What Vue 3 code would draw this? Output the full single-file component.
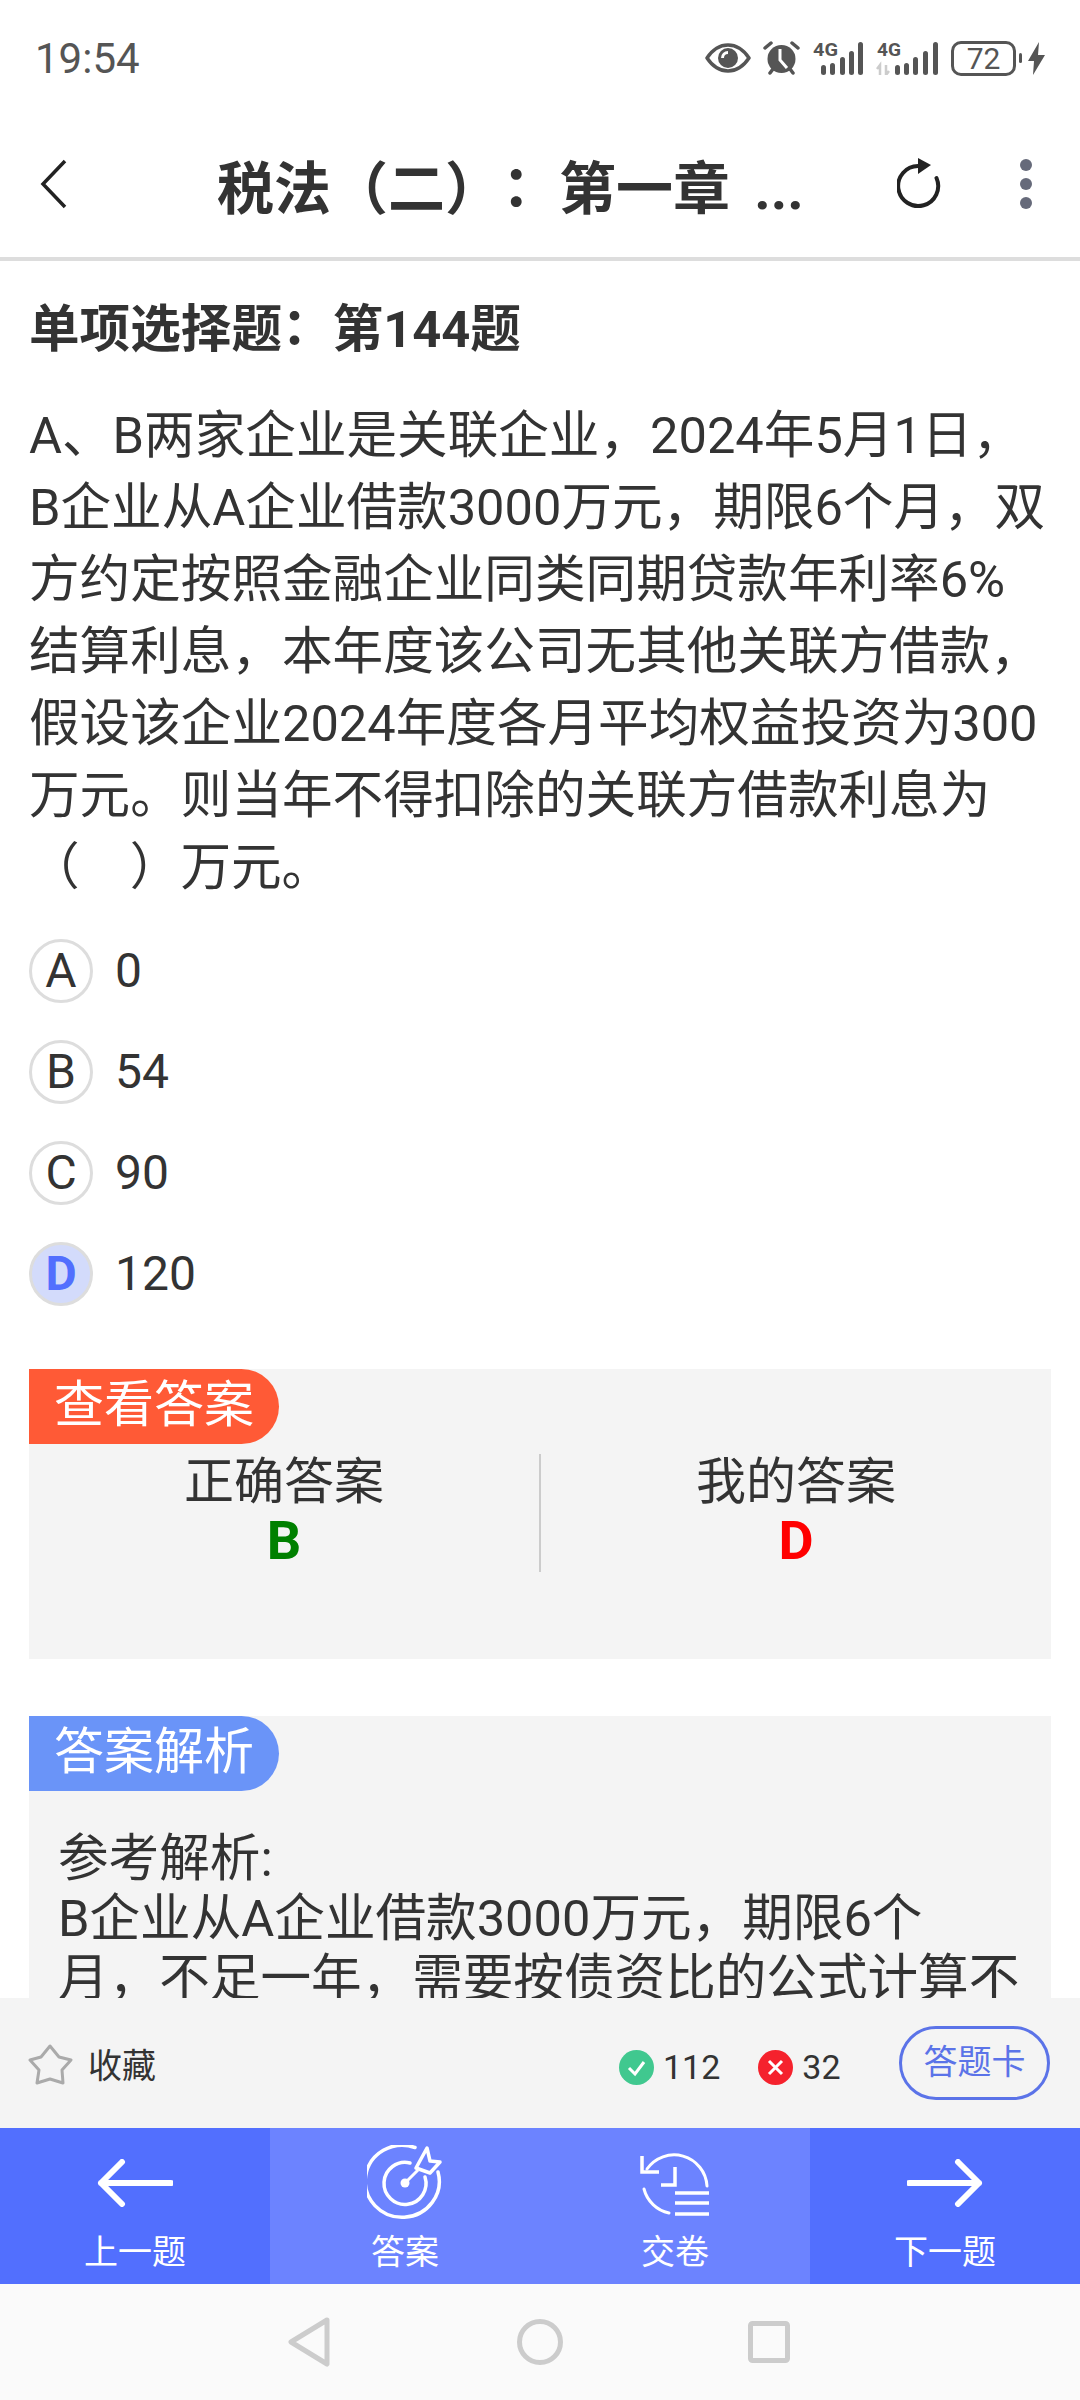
<script setup>
const questionLines = [
  'A、B两家企业是关联企业，2024年5月1日，',
  'B企业从A企业借款3000万元，期限6个月，双',
  '方约定按照金融企业同类同期贷款年利率6%',
  '结算利息，本年度该公司无其他关联方借款，',
  '假设该企业2024年度各月平均权益投资为300',
  '万元。则当年不得扣除的关联方借款利息为',
  '（\u00a0\u00a0\u00a0\u00a0）万元。'
]

const options = [
  { key: 'A', text: '0' },
  { key: 'B', text: '54' },
  { key: 'C', text: '90' },
  { key: 'D', text: '120', picked: true }
]

const analysisLines = [
  '参考解析:',
  'B企业从A企业借款3000万元，期限6个',
  '月，不足一年，需要按债资比的公式计算不',
  '得扣除的利息。'
]
</script>

<template>
  <div class="page">
    <div class="status">
      <span class="time">19:54</span>
      <div class="status__icons">
        <svg class="eye" width="46" height="30" viewBox="0 0 46 30">
          <path d="M2 15C8 6 15 2 23 2s15 4 21 13c-6 9-13 13-21 13S8 24 2 15z" fill="none" stroke="#555" stroke-width="3.5" stroke-linejoin="round" />
          <circle cx="23" cy="15" r="10" fill="#555" />
          <path d="M23 8a7 7 0 0 0-7 7h3a4 4 0 0 1 4-4z" fill="#fff" />
        </svg>
        <svg class="alarm" width="37" height="34" viewBox="0 0 37 34">
          <circle cx="18.5" cy="18" r="14" fill="#555" />
          <path d="M2 7l6-5M35 7l-6-5M7 32l3-4M30 32l-3-4" stroke="#555" stroke-width="3.5" stroke-linecap="round" />
          <path d="M17 8v11l7 8" fill="none" stroke="#fff" stroke-width="3" />
        </svg>
        <svg class="signal-one" width="50" height="33" viewBox="0 0 50 33">
          <text x="0" y="14" font-size="18" font-weight="700" font-family="Roboto, sans-serif" fill="#555" textLength="25" lengthAdjust="spacingAndGlyphs">4G</text>
          <rect x="8" y="23" width="5" height="10" rx="2.5" fill="#555" />
          <rect x="17" y="21" width="5" height="12" rx="2.5" fill="#555" />
          <rect x="27" y="15" width="5" height="18" rx="2.5" fill="#555" />
          <rect x="36" y="9" width="5" height="24" rx="2.5" fill="#555" />
          <rect x="45" y="0" width="5" height="33" rx="2.5" fill="#555" />
        </svg>
        <svg class="signal-two" width="63" height="33" viewBox="0 0 63 33">
          <text x="2" y="14" font-size="18" font-weight="700" font-family="Roboto, sans-serif" fill="#555" textLength="24" lengthAdjust="spacingAndGlyphs">4G</text>
          <path d="M5 33V23l-3 4M11 23v10l3-4" fill="none" stroke="#ccc" stroke-width="2.5" />
          <rect x="20" y="23" width="5" height="10" rx="2.5" fill="#555" />
          <rect x="29" y="21" width="5" height="12" rx="2.5" fill="#555" />
          <rect x="38" y="15" width="5" height="18" rx="2.5" fill="#555" />
          <rect x="48" y="9" width="5" height="24" rx="2.5" fill="#555" />
          <rect x="58" y="0" width="5" height="33" rx="2.5" fill="#555" />
        </svg>
        <div class="battery">72</div>
        <span class="battery__nub"></span>
        <svg class="bolt" width="17" height="33" viewBox="0 0 17 33">
          <path d="M11 0L0 19h6l-1 14L17 13h-7z" fill="#555" />
        </svg>
      </div>
    </div>

    <div class="titlebar">
      <svg class="titlebar__back" width="28" height="50" viewBox="0 0 28 50">
        <path d="M25 2L3 25l22 23" fill="none" stroke="#222" stroke-width="3.5" />
      </svg>
      <div class="titlebar__text">税法（二）<span class="colon">：</span>第一章 ...</div>
      <svg class="titlebar__refresh" width="46" height="52" viewBox="0 0 46 52">
        <path d="M21 8A20 20 0 1 0 39.500 20" fill="none" stroke="#222" stroke-width="4" stroke-linecap="round" />
        <path d="M21 0l13 7-13 9z" fill="#222" />
      </svg>
      <div class="titlebar__more">
        <span></span><span></span><span></span>
      </div>
    </div>

    <div class="content">
      <div class="heading">单项选择题<span class="colon">：</span>第144题</div>
      <div class="question">
        <div v-for="line in questionLines" :key="line" class="line">{{ line }}</div>
      </div>

      <div class="options">
        <div v-for="option in options" :key="option.key" class="option">
          <span class="option__key" :class="{ 'option__key--picked': option.picked }">{{ option.key }}</span>
          <span class="option__text">{{ option.text }}</span>
        </div>
      </div>

      <div class="panel panel--answer">
        <div class="panel__tag panel__tag--orange">查看答案</div>
        <div class="answers">
          <div class="answers__col answers__col--left">
            <div class="answers__title">正确答案</div>
            <div class="answers__value answers__value--right">B</div>
          </div>
          <div class="answers__col">
            <div class="answers__title">我的答案</div>
            <div class="answers__value answers__value--wrong">D</div>
          </div>
        </div>
      </div>

      <div class="panel panel--analysis">
        <div class="panel__tag panel__tag--blue">答案解析</div>
        <div class="analysis">
          <div v-for="line in analysisLines" :key="line" class="line">{{ line }}</div>
        </div>
      </div>
    </div>

    <div class="toolbar">
      <svg class="toolbar__star" width="45" height="43" viewBox="0 0 45 43">
        <path d="M22 3L31 14 43 17 34 27 35 40 22 36 9 40 11 27 2 17 13 14z" fill="none" stroke="#aaa" stroke-width="3" stroke-linejoin="round" />
      </svg>
      <span class="toolbar__fav">收藏</span>
      <svg class="toolbar__count-icon" width="35" height="35" viewBox="0 0 35 35">
        <circle cx="17.500" cy="17.500" r="17.500" fill="#40c88f" />
        <path d="M10 18l6 6 9-12" fill="none" stroke="#fff" stroke-width="3" />
      </svg>
      <span class="toolbar__count">112</span>
      <svg class="toolbar__count-icon toolbar__count-icon--wrong" width="35" height="35" viewBox="0 0 35 35">
        <circle cx="17.500" cy="17.500" r="17.500" fill="#f5222d" />
        <path d="M11 11l13 13M24 11L11 24" fill="none" stroke="#fff" stroke-width="3" />
      </svg>
      <span class="toolbar__count">32</span>
      <div class="toolbar__card">答题卡</div>
    </div>

    <div class="actions">
      <div class="action">
        <svg width="76" height="48" viewBox="0 0 76 48">
          <path d="M74 24H4M25 3L4 24l21 21" fill="none" stroke="#fff" stroke-width="6" stroke-linecap="round" stroke-linejoin="round" />
        </svg>
        <span>上一题</span>
      </div>
      <div class="action action--light">
        <svg width="76" height="76" viewBox="-38 -38 76 76">
          <path d="M10-35.500A37 36 0 1 0 33-11" fill="none" stroke="#fff" stroke-width="3.500" stroke-linecap="round" />
          <path d="M5-20A21 21 0 1 0 20-6" fill="none" stroke="#fff" stroke-width="3.500" stroke-linecap="round" />
          <circle cx="0" cy="0" r="4.500" fill="#fff" />
          <path d="M0 0L13-13" stroke="#fff" stroke-width="3" />
          <path d="M22-35l3 13 10 1-10 11-14-5z" fill="none" stroke="#fff" stroke-width="3.500" stroke-linejoin="round" />
        </svg>
        <span>答案</span>
      </div>
      <div class="action action--light">
        <svg width="76" height="76" viewBox="-4 -4 76 76">
          <path d="M6 20A33 33 0 0 1 66 37M3 40A33 33 0 0 0 28 64" fill="none" stroke="#fff" stroke-width="3" stroke-linecap="round" />
          <path d="M1 7v16h17M34 18v18H20M34 44h34M34 54h34M34 65h34" fill="none" stroke="#fff" stroke-width="3.500" />
        </svg>
        <span>交卷</span>
      </div>
      <div class="action">
        <svg width="76" height="48" viewBox="0 0 76 48">
          <path d="M2 24H72M51 3l21 21-21 21" fill="none" stroke="#fff" stroke-width="6" stroke-linecap="round" stroke-linejoin="round" />
        </svg>
        <span>下一题</span>
      </div>
    </div>

    <div class="sysnav">
      <svg width="44" height="50" viewBox="0 0 44 50">
        <path d="M39 3L3 25l36 22z" fill="none" stroke="#ccc" stroke-width="5" stroke-linejoin="round" />
      </svg>
      <svg width="46" height="46" viewBox="0 0 46 46">
        <circle cx="23" cy="23" r="20.500" fill="none" stroke="#ccc" stroke-width="5" />
      </svg>
      <svg width="42" height="42" viewBox="0 0 42 42">
        <rect x="2.500" y="2.500" width="37" height="37" rx="2" fill="none" stroke="#ccc" stroke-width="5" />
      </svg>
    </div>
  </div>
</template>

<style>
html, body {
  margin: 0;
  padding: 0;
  background: #fff;
}
</style>

<style scoped>
.page {
  display: flex;
  flex-direction: column;
  width: 1080px;
  height: 2400px;
  overflow: hidden;
  background: #fff;
  color: #333;
  font-family: Roboto, "Noto Sans CJK SC", sans-serif;
  text-spacing-trim: space-all;
}
.colon {
  font-family: "Noto Sans CJK JP", sans-serif;
  line-height: 0;
  margin: 0 0.25em 0 -0.25em;
}

.status {
  flex: none;
  display: flex;
  align-items: center;
  justify-content: space-between;
  height: 116px;
  padding: 0 35px;
  box-sizing: border-box;
  color: #555;
}
.time {
  font-size: 42px;
}
.status__icons {
  display: flex;
  align-items: center;
}
.eye { margin-right: 12px; }
.alarm { margin-right: 13px; }
.signal-one { margin-right: 12px; }
.signal-two { margin-right: 13px; }
.battery {
  width: 65px;
  height: 35px;
  box-sizing: border-box;
  border: 3px solid #555;
  border-radius: 10px;
  font-size: 30px;
  line-height: 29px;
  text-align: center;
}
.battery__nub {
  width: 3px;
  height: 10px;
  margin: 0 6px 0 3px;
  background: #555;
  border-radius: 2px;
}
.bolt {
  display: block;
}

.titlebar {
  flex: none;
  display: flex;
  align-items: center;
  height: 145px;
  padding-bottom: 6px;
  box-sizing: border-box;
  border-bottom: 4px solid #ddd;
}
.titlebar__back {
  margin-left: 40px;
}
.titlebar__text {
  width: 680px;
  margin-left: 149px;
  font-size: 57px;
  font-weight: 700;
  word-spacing: 10px;
  white-space: nowrap;
}
.titlebar__refresh {
  flex: none;
}
.titlebar__more {
  display: flex;
  flex-direction: column;
  gap: 7px;
  margin-left: 77px;
}
.titlebar__more span {
  width: 12px;
  height: 12px;
  border-radius: 50%;
  background: #666a7a;
}

.content {
  flex: 1;
  min-height: 0;
  overflow: hidden;
  padding: 33px 0 0 29px;
}
.heading {
  font-size: 50.6px;
  font-weight: 700;
  line-height: 72px;
  margin-bottom: 34px;
}
.question {
  font-size: 50.6px;
  line-height: 72px;
}
.line {
  white-space: nowrap;
}

.options {
  display: flex;
  flex-direction: column;
  margin-top: 16px;
}
.option {
  display: flex;
  align-items: center;
  height: 101px;
}
.option__key {
  display: flex;
  align-items: center;
  justify-content: center;
  width: 64px;
  height: 64px;
  box-sizing: border-box;
  border: 3px solid #ddd;
  border-radius: 50%;
  font-size: 48px;
}
.option__key--picked {
  background: #d3dbfb;
  color: #526ffe;
  font-weight: 700;
}
.option__text {
  margin-left: 22px;
  font-size: 48px;
}

.panel {
  width: 1022px;
  background: #f4f4f4;
}
.panel--answer {
  height: 290px;
  margin-top: 45px;
}
.panel--analysis {
  height: 400px;
  margin-top: 57px;
}
.panel__tag {
  width: 250px;
  height: 75px;
  padding-left: 25px;
  box-sizing: border-box;
  border-radius: 0 38px 38px 0;
  color: #fff;
  font-size: 50px;
  line-height: 72px;
}
.panel__tag--orange {
  background: #ff5a36;
}
.panel__tag--blue {
  background: #6a94f8;
}

.answers {
  display: flex;
  margin-top: 10px;
  height: 118px;
}
.answers__col {
  flex: 1;
  padding-top: 3px;
  text-align: center;
}
.answers__col--left {
  flex: none;
  width: 510px;
  border-right: 2px solid #ccc;
}
.answers__title {
  font-size: 50px;
  line-height: 50px;
}
.answers__value {
  font-size: 54px;
  font-weight: 700;
  line-height: 68px;
}
.answers__value--right {
  color: #008000;
}
.answers__value--wrong {
  color: #f00;
}

.analysis {
  padding: 38px 0 0 29px;
  font-size: 50.6px;
  line-height: 60px;
}

.toolbar {
  flex: none;
  display: flex;
  align-items: center;
  height: 130px;
  padding: 0 30px 0 28px;
  box-sizing: border-box;
  background: #f4f4f4;
}
.toolbar__star {
  margin-top: 2px;
}
.toolbar__fav {
  margin-left: 15px;
  font-size: 34px;
  color: #333;
}
.toolbar__count-icon {
  margin-left: 463px;
  margin-top: 9px;
}
.toolbar__count-icon--wrong {
  margin-left: 38px;
}
.toolbar__count {
  margin-left: 9px;
  margin-top: 7px;
  font-size: 34px;
}
.toolbar__card {
  width: 151px;
  height: 74px;
  margin-left: auto;
  box-sizing: border-box;
  border: 3px solid #5b73e8;
  border-radius: 37px;
  color: #5b73e8;
  font-size: 34px;
  line-height: 66px;
  text-align: center;
}

.actions {
  flex: none;
  display: flex;
  height: 156px;
  background: #526ffe;
}
.action {
  flex: 1;
  display: flex;
  flex-direction: column;
  align-items: center;
  justify-content: flex-end;
  color: #fff;
  font-size: 34px;
  padding-bottom: 8px;
  box-sizing: border-box;
}
.action svg {
  margin-bottom: 7px;
}
.action:first-child svg,
.action:last-child svg {
  margin-bottom: 21px;
}
.action span {
  line-height: 48px;
}
.action--light {
  background: #6c83ff;
}

.sysnav {
  flex: none;
  display: flex;
  align-items: center;
  gap: 185px;
  height: 116px;
  padding-left: 288px;
  background: #fafafa;
}
</style>
